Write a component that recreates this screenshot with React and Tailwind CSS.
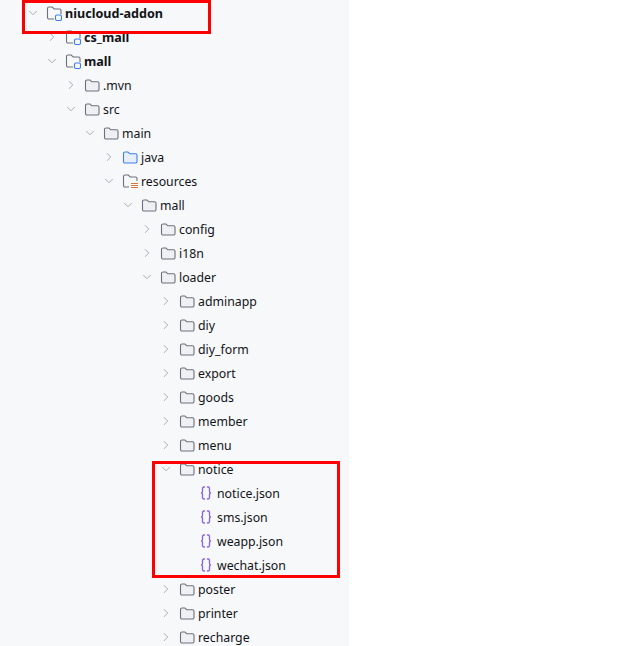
import { ChevronDown, ChevronRight } from 'lucide-react';

const rows = [
    { name: 'niucloud-addon', depth: 0, open: true, type: 'module', bold: true },
    { name: 'cs_mall', depth: 1, type: 'module', bold: true },
    { name: 'mall', depth: 1, open: true, type: 'module', bold: true },
    { name: '.mvn', depth: 2, type: 'folder' },
    { name: 'src', depth: 2, open: true, type: 'folder' },
    { name: 'main', depth: 3, open: true, type: 'folder' },
    { name: 'java', depth: 4, type: 'source' },
    { name: 'resources', depth: 4, open: true, type: 'resources' },
    { name: 'mall', depth: 5, open: true, type: 'folder' },
    { name: 'config', depth: 6, type: 'folder' },
    { name: 'i18n', depth: 6, type: 'folder' },
    { name: 'loader', depth: 6, open: true, type: 'folder' },
    { name: 'adminapp', depth: 7, type: 'folder' },
    { name: 'diy', depth: 7, type: 'folder' },
    { name: 'diy_form', depth: 7, type: 'folder' },
    { name: 'export', depth: 7, type: 'folder' },
    { name: 'goods', depth: 7, type: 'folder' },
    { name: 'member', depth: 7, type: 'folder' },
    { name: 'menu', depth: 7, type: 'folder' },
    { name: 'notice', depth: 7, open: true, type: 'folder' },
    { name: 'notice.json', depth: 8, type: 'json', leaf: true },
    { name: 'sms.json', depth: 8, type: 'json', leaf: true },
    { name: 'weapp.json', depth: 8, type: 'json', leaf: true },
    { name: 'wechat.json', depth: 8, type: 'json', leaf: true },
    { name: 'poster', depth: 7, type: 'folder' },
    { name: 'printer', depth: 7, type: 'folder' },
    { name: 'recharge', depth: 7, type: 'folder' },
];

const folderPath = 'M1.500 4.500A1.500 1.500 0 0 1 3 3h3l1.800 1.800h5.700a1.500 1.500 0 0 1 1.500 1.500v6.200a1.500 1.500 0 0 1-1.500 1.500H3a1.500 1.500 0 0 1-1.500-1.500z';

function FileIcon({ type }) {
    if (type === 'json') {
        return (
            <svg width="16" height="16" viewBox="0 0 16 16" fill="none" stroke="#8660e6" strokeWidth="1.3" strokeLinecap="round">
                <path d="M6.500 2H6a1.500 1.500 0 0 0-1.500 1.500V6.500A1.500 1.500 0 0 1 3 8a1.500 1.500 0 0 1 1.500 1.500v3A1.500 1.500 0 0 0 6 14h.5" />
                <path d="M9.500 2h.5a1.500 1.500 0 0 1 1.500 1.500V6.500A1.500 1.500 0 0 0 13 8a1.500 1.500 0 0 0-1.500 1.500v3A1.500 1.500 0 0 1 10 14h-.5" />
            </svg>
        );
    }
    if (type === 'source') {
        return (
            <svg width="16" height="16" viewBox="0 0 16 16" fill="#e7effd" stroke="#3f7ef0" strokeWidth="1.1">
                <path d={folderPath} />
            </svg>
        );
    }
    if (type === 'module') {
        return (
            <svg width="16" height="16" viewBox="0 0 16 16" fill="none">
                <path d="M8 14H3a1.500 1.500 0 0 1-1.500-1.500v-9A1.500 1.500 0 0 1 3 2h3.200l2 2h5.300a1.500 1.500 0 0 1 1.500 1.500V9" stroke="#6c707e" strokeWidth="1.100" />
                <rect x="9.500" y="10" width="6" height="5.500" rx="1.500" fill="#f7f8fa" stroke="#3f7ef0" strokeWidth="1.100" />
            </svg>
        );
    }
    if (type === 'resources') {
        return (
            <svg width="16" height="16" viewBox="0 0 16 16" fill="none">
                <path d="M7 14H3a1.500 1.500 0 0 1-1.500-1.500v-9A1.500 1.500 0 0 1 3 2h3.200l2 2h5.300a1.500 1.500 0 0 1 1.500 1.500V8" stroke="#6c707e" strokeWidth="1.100" />
                <path d="M9 10.500h7M9 12.500h7M9 14.500h7" stroke="#d9773c" />
            </svg>
        );
    }
    return (
        <svg width="16" height="16" viewBox="0 0 16 16" fill="#eff0f3" stroke="#6c707e" strokeWidth="1.100">
            <path d={folderPath} />
        </svg>
    );
}

function TreeRow({ row }) {
    return (
        <div className="flex h-6 items-center" style={{ paddingLeft: 26 + row.depth * 19 }}>
            <span className="flex w-[14px] shrink-0 justify-center text-[#8c8f99]">
                {row.leaf ? null : row.open ? (
                    <ChevronDown size={14} strokeWidth={1.25} />
                ) : (
                    <ChevronRight size={14} strokeWidth={1.25} />
                )}
            </span>
            <span className="ml-[6px] flex w-4 shrink-0 items-center">
                <FileIcon type={row.type} />
            </span>
            <span className={`ml-[3px] whitespace-nowrap pt-[2px] text-[#111317] ${row.bold ? 'text-[12.6px] font-bold' : 'text-[12.3px]'}`}>
                {row.name}
            </span>
        </div>
    );
}

export default function App() {
    return (
        <div className="relative h-[646px] w-[641px] overflow-hidden bg-white font-['Noto_Sans',sans-serif]">
            <div className="h-full w-[349px] bg-[#f7f8fa] pt-px">
                {rows.map((row, index) => (
                    <TreeRow key={index} row={row} />
                ))}
            </div>
            <div className="absolute left-[22px] top-0 h-[34px] w-[189px] border-[3px] border-[#ff0000]" />
            <div className="absolute left-[152px] top-[461px] h-[117px] w-[188px] border-[3px] border-[#ff0000]" />
        </div>
    );
}
